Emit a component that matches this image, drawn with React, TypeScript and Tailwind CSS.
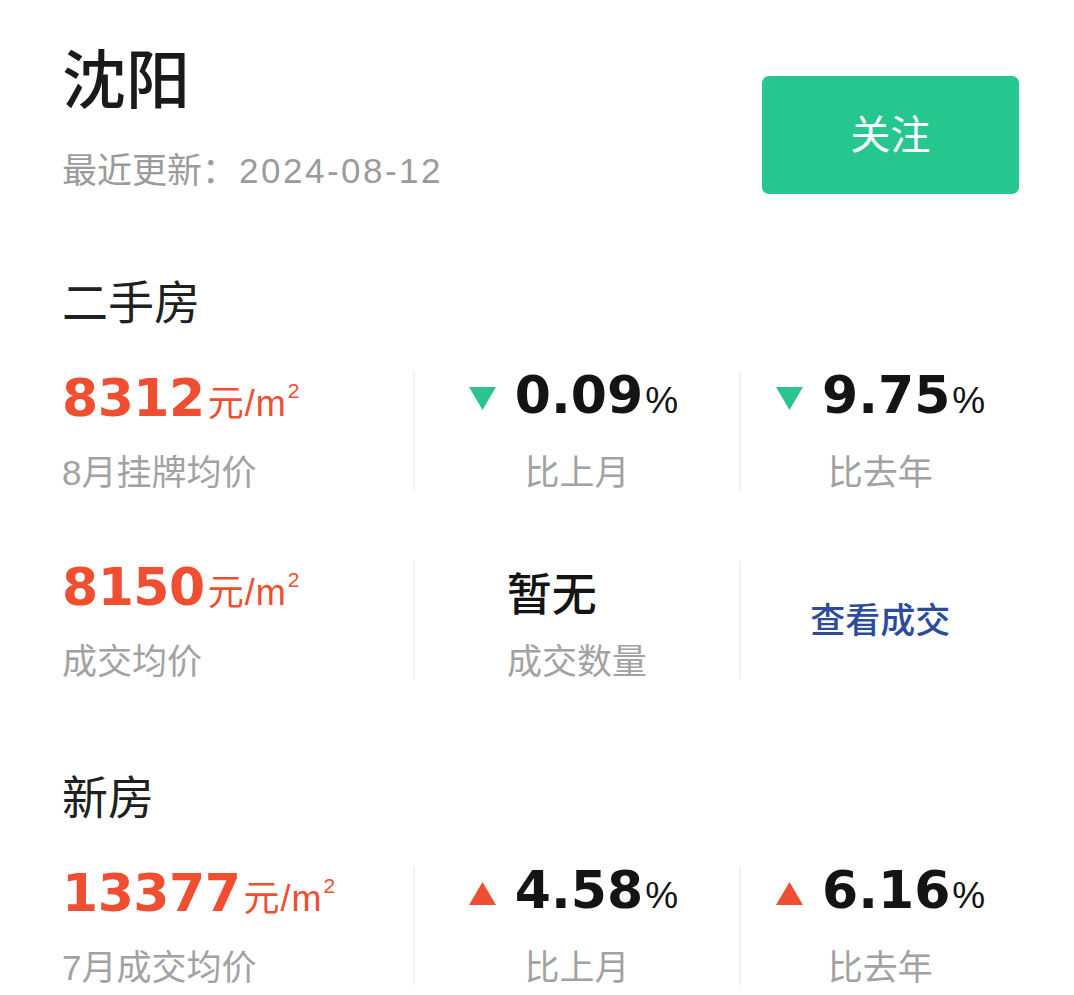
import { ReactNode } from 'react'

const RED = 'text-[#ef4e31]'

const Unit = () => (
  <span className={`ml-[3px] text-[36px] font-normal tracking-[1px] ${RED} font-['Liberation_Sans','Noto_Sans_CJK_SC',sans-serif]`}>
    元/m<sup className="ml-[1px] text-[21px] top-[-0.85em]">2</sup>
  </span>
)

const Price = ({ value }: { value: string }) => (
  <div className="flex items-baseline h-[52px] leading-[52px]">
    <span className={`text-[52px] font-bold tracking-[-0.5px] ${RED} font-['DejaVu_Sans',sans-serif]`}>{value}</span>
    <Unit />
  </div>
)

const Triangle = ({ up }: { up?: boolean }) => (
  <svg width="29" height="25" viewBox="0 0 29 25" className="mr-[18px] shrink-0">
    {up ? (
      <polygon points="14.5,1 28,24 1,24" fill="#ef4e31" />
    ) : (
      <polygon points="1,1 28,1 14.5,24" fill="#2bc48e" />
    )}
  </svg>
)

const Change = ({ value, up, shift = '' }: { value: string; up?: boolean; shift?: string }) => (
  <div className={`flex items-center h-[52px] ${shift}`}>
    <Triangle up={up} />
    <div className="flex items-baseline leading-[52px]">
      <span className="text-[52px] font-bold text-[#141414] font-['DejaVu_Sans',sans-serif]">{value}</span>
      <span className="ml-[2px] text-[37px] text-[#141414] font-['Liberation_Sans',sans-serif]">%</span>
    </div>
  </div>
)

const Label = ({ children }: { children: ReactNode }) => (
  <div className="mt-[31px] text-[35px] leading-[35px] text-[#a2a2a2]">{children}</div>
)

const Row = ({ a, b, c, className = '' }: { a: ReactNode; b: ReactNode; c: ReactNode; className?: string }) => (
  <div className={`flex items-stretch ${className}`}>
    <div className="w-[351px] flex flex-col">{a}</div>
    <div className="w-[327px] flex flex-col items-center border-l-2 border-[#f2f2f2]">{b}</div>
    <div className="w-[280px] flex flex-col items-center justify-center border-l-2 border-[#f2f2f2]">{c}</div>
  </div>
)

export default function App() {
  return (
    <div className="w-[1074px] h-[995px] overflow-hidden bg-white pl-[62px] pr-[55px] font-['Liberation_Sans','Noto_Sans_CJK_SC',sans-serif]">
      <div className="flex items-start justify-between pt-[49px]">
        <div>
          <h1 className="text-[64px] leading-[64px] font-medium text-[#1a1a1a]">沈阳</h1>
          <p className="mt-[40px] text-[35px] leading-[35px] text-[#9b9b9b]">
            最近更新：<span className="ml-[2px] tracking-[2.5px]">2024-08-12</span>
          </p>
        </div>
        <button className="mt-[27px] w-[257px] h-[118px] rounded-[7px] bg-[#25c78f] text-white text-[40px] leading-none">
          关注
        </button>
      </div>

      <h2 className="mt-[86px] text-[46px] leading-[46px] text-[#202020]">二手房</h2>

      <Row
        className="mt-[46px]"
        a={
          <>
            <Price value="8312" />
            <Label>8月挂牌均价</Label>
          </>
        }
        b={
          <>
            <Change value="0.09" shift="-ml-[8px]" />
            <Label>比上月</Label>
          </>
        }
        c={
          <>
            <Change value="9.75" />
            <Label>比去年</Label>
          </>
        }
      />

      <Row
        className="mt-[71px]"
        a={
          <>
            <Price value="8150" />
            <Label>成交均价</Label>
          </>
        }
        b={
          <>
            <div className="self-start ml-[92px] h-[52px] pt-[12px] text-[45px] leading-[45px] font-medium text-[#141414]">暂无</div>
            <Label>成交数量</Label>
          </>
        }
        c={<span className="text-[35px] leading-[35px] font-medium text-[#2b4c9b]">查看成交</span>}
      />

      <h2 className="mt-[96px] text-[46px] leading-[46px] text-[#202020]">新房</h2>

      <Row
        className="mt-[46px]"
        a={
          <>
            <Price value="13377" />
            <Label>7月成交均价</Label>
          </>
        }
        b={
          <>
            <Change value="4.58" up shift="-ml-[8px]" />
            <Label>比上月</Label>
          </>
        }
        c={
          <>
            <Change value="6.16" up />
            <Label>比去年</Label>
          </>
        }
      />
    </div>
  )
}
